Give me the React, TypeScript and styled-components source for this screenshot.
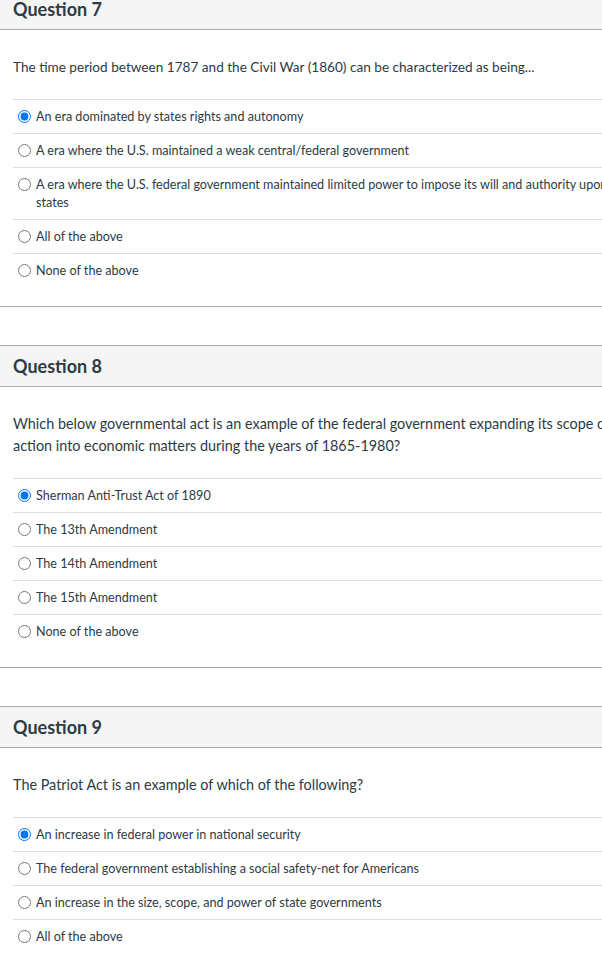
import { createGlobalStyle, styled } from 'styled-components'

const GlobalStyle = createGlobalStyle`
	html, body {
		margin: 0;
		padding: 0;
		background: #fff;
		overflow: hidden;
	}
	body {
		font-family: Lato, "Liberation Sans", sans-serif;
		color: #2d3b45;
	}
`

interface QuestionData {
	number: number
	text: string
	textSize: number
	answers: string[]
	selected: number
}

const questions: QuestionData[] = [
	{
		number: 7,
		text: 'The time period between 1787 and the Civil War (1860) can be characterized as being...',
		textSize: 13.6,
		answers: [
			'An era dominated by states rights and autonomy',
			'A era where the U.S. maintained a weak central/federal government',
			'A era where the U.S. federal government maintained limited power to impose its will and authority upon the states',
			'All of the above',
			'None of the above',
		],
		selected: 0,
	},
	{
		number: 8,
		text: 'Which below governmental act is an example of the federal government expanding its scope of action into economic matters during the years of 1865-1980?',
		textSize: 14.4,
		answers: [
			'Sherman Anti-Trust Act of 1890',
			'The 13th Amendment',
			'The 14th Amendment',
			'The 15th Amendment',
			'None of the above',
		],
		selected: 0,
	},
	{
		number: 9,
		text: 'The Patriot Act is an example of which of the following?',
		textSize: 14.4,
		answers: [
			'An increase in federal power in national security',
			'The federal government establishing a social safety-net for Americans',
			'An increase in the size, scope, and power of state governments',
			'All of the above',
			'None of the above',
		],
		selected: 0,
	},
]

const Question = ({ q }: { q: QuestionData }) => {
	return	<Block>
				<Header>Question {q.number}</Header>
				<Body>
					<Text size={q.textSize}>{q.text}</Text>
					<Answers>
						{q.answers.map((a, i) =>
							<Answer key={i}>
								<Radio type="radio" name={`q${q.number}`} defaultChecked={i === q.selected}/>
								<AnswerLabel>{a}</AnswerLabel>
							</Answer>
						)}
					</Answers>
				</Body>
			</Block>
}

export default function App() {
	return	<>
				<GlobalStyle/>
				<Page>
					{questions.map(q => <Question key={q.number} q={q}/>)}
				</Page>
			</>
}

// the quiz is wider than the window; the right side is clipped
const Page = styled.div`
	width: 638px;
	margin-top: -12px;
	display: flex;
	flex-direction: column;
	gap: 38px;
`

const Block = styled.div`
	border-top: 1px solid #aaa;
	border-bottom: 1px solid #aaa;
`

const Header = styled.div`
	background: #f5f5f5;
	border-bottom: 1px solid #aaa;
	padding: 0 13px;
	height: 40px;
	display: flex;
	align-items: center;
	font-size: 18px;
	font-weight: 700;
	color: #2d3b45;
`

const Body = styled.div`
	padding: 26px 0 19px 13px;
`

const Text = styled.div<{ size: number }>`
	font-size: ${props => props.size}px;
	line-height: 22px;
	padding-bottom: 21px;
`

const Answers = styled.div`
	display: flex;
	flex-direction: column;
`

const Answer = styled.label`
	display: flex;
	align-items: flex-start;
	border-top: 1px solid #ddd;
	padding: 8px 0 7px;
	font-size: 12.6px;
	line-height: 18px;
`

const Radio = styled.input`
	width: 13px;
	height: 13px;
	margin: 2px 5px 0 5px;
	flex: none;
`

const AnswerLabel = styled.span`
	flex: 1;
`
